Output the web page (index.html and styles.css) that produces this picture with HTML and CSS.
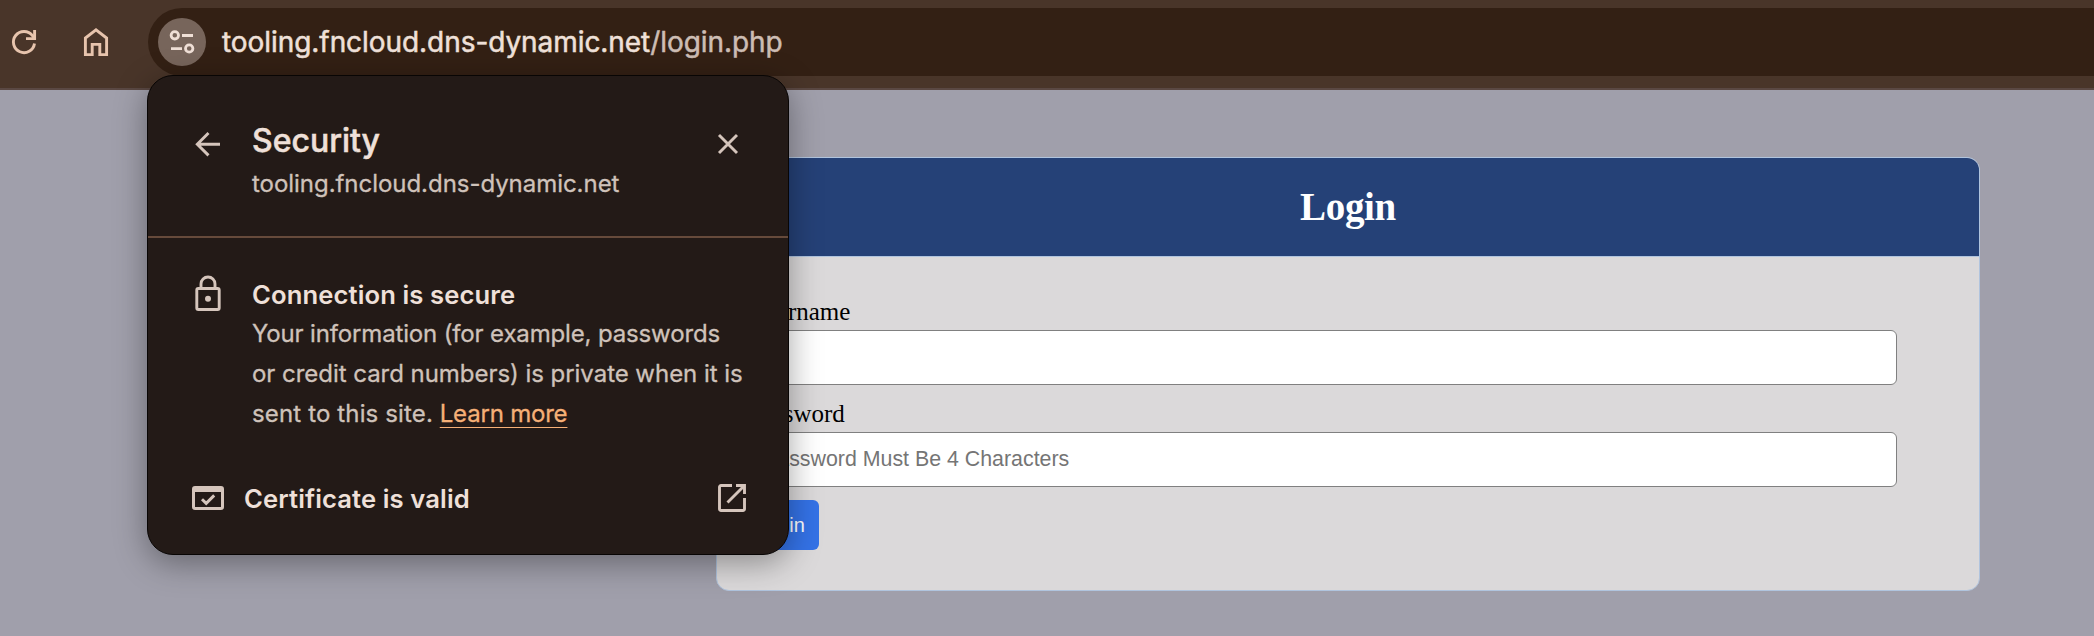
FILE: index.html
```html
<!DOCTYPE html>
<html lang="en">
<head>
<meta charset="utf-8">
<title>Login</title>
<link rel="stylesheet" href="styles.css">
</head>
<body>
<header class="toolbar">
  <svg class="tool-icon reload" width="32" height="32" viewBox="0 0 32 32"><path d="M26.500 17.500A10.600 10.600 0 1 1 24.500 9.700L26.500 12.500" /><path d="M26.600 4v8.600H18" /></svg>
  <svg class="tool-icon home" width="32" height="32" viewBox="0 0 32 32"><path d="M5.400 28.600V12L16 3.800 26.600 12v16.600h-6.800V18.400h-7.600v10.200z" /></svg>
  <div class="omnibox">
    <span class="site-info">
      <svg width="48" height="48" viewBox="0 0 48 48"><circle cx="16.800" cy="17.300" r="3.700"/><path d="M24 17.500h11M13 30.700h11"/><circle cx="31.200" cy="30.500" r="3.700"/></svg>
    </span>
    <span class="url">tooling.fncloud.dns-dynamic.net<span class="path">/login.php</span></span>
  </div>
</header>
<main class="page">
  <section class="card">
    <h1 class="card-title">Login</h1>
    <form class="form">
      <label class="label" for="user">Username</label>
      <input class="field" id="user" type="text">
      <label class="label second" for="pass">Password</label>
      <input class="field" id="pass" type="password" placeholder="Password Must Be 4 Characters">
      <button class="submit" type="button">Login</button>
    </form>
  </section>
</main>
<aside class="bubble">
  <div class="bubble-head">
    <svg class="icon back" width="32" height="32" viewBox="0 0 32 32"><path d="M28 16.200H5.500M16.500 5L5.300 16.200l11.200 11.200"/></svg>
    <div class="heading">
      <h2 class="title">Security</h2>
      <p class="host">tooling.fncloud.dns-dynamic.net</p>
    </div>
    <svg class="icon close" width="24" height="24" viewBox="0 0 24 24"><path d="M3 3l18 18M21 3L3 21"/></svg>
  </div>
  <div class="connection">
    <svg class="icon lock" width="28" height="36" viewBox="0 0 28 36"><rect x="2.800" y="13.500" width="22.400" height="21" rx="1.500"/><path d="M7 13V9a7 7 0 0 1 14 0v4"/><circle class="dot" cx="14" cy="23.800" r="3"/></svg>
    <div class="detail">
      <h3 class="strong">Connection is secure</h3>
      <p class="text"><span class="l1">Your information (for example, passwords</span><br><span class="l2">or credit card numbers) is private when it is</span><br><span class="l3">sent to this site.</span> <a class="more">Learn more</a></p>
    </div>
  </div>
  <div class="certificate">
    <svg class="icon cert" width="32" height="24" viewBox="0 0 32 24"><path class="solid" fill-rule="evenodd" d="M3 0h26a3 3 0 0 1 3 3v18a3 3 0 0 1-3 3H3a3 3 0 0 1-3-3V3a3 3 0 0 1 3-3zM3 6v15h26V6z"/><path d="M10 13.200l4.200 4.200 8-8"/></svg>
    <span class="strong cert-label">Certificate is valid</span>
    <svg class="icon external" width="28" height="28" viewBox="0 0 28 28"><path d="M14 1.500H3A1.500 1.500 0 0 0 1.500 3v22A1.500 1.500 0 0 0 3 26.500h22a1.500 1.500 0 0 0 1.500-1.500V14M18 1.500h8.500V10M26.500 1.500L9.500 18.500"/></svg>
  </div>
</aside>
</body>
</html>
```
FILE: styles.css
```css
* { box-sizing: border-box; }
body { margin: 0; width: 2094px; height: 636px; overflow: hidden; background: #a09fab; display: flex; flex-direction: column; position: relative; }
h1, h2, h3, p { margin: 0; }
svg { display: block; flex: none; }
.toolbar { height: 90px; flex: none; background: #493529; border-bottom: 2px solid #5a4843; display: flex; padding-top: 8px; padding-left: 8px; }
.tool-icon { fill: none; stroke: #e7c4ad; stroke-width: 2.900; margin-top: 18px; }
.home { margin-left: 40px; }
.omnibox { flex: 1; height: 68px; margin-left: 36px; padding-left: 10px; background: #332014; border-radius: 34px 0 0 34px; display: flex; align-items: center; }
.site-info { width: 48px; height: 48px; border-radius: 50%; background: #77655b; }
.site-info svg { fill: none; stroke: #efdfd6; stroke-width: 2.800; }
.url { margin-left: 16px; font: 400 28px/48px Inter, sans-serif; letter-spacing: -0.060px; color: #efe0d9; white-space: nowrap; -webkit-text-stroke: 0.500px currentColor; }
.path { color: #cdbdb4; }
.page { padding: 67px 0 0 716px; }
.card { width: 1264px; height: 434px; border: 1px solid #b0c4de; border-radius: 13px; background: #dbd9da; overflow: hidden; }
.card-title { height: 99px; background: #254177; border-bottom: 1px solid #b0c4de; color: #fff; text-align: center; font: bold 39px/97px "Liberation Serif", serif; letter-spacing: -0.300px; }
.form { padding: 39px 82px 0 32px; display: flex; flex-direction: column; align-items: flex-start; }
.label { font: 25px/32px "Liberation Serif", serif; color: #000; margin-bottom: 2px; }
.second { margin-top: 13px; }
.field { width: 100%; height: 55px; border: 1px solid #808080; border-radius: 6px; background: #fff; padding: 0 13px; font: 21.360px "Liberation Sans", sans-serif; }
.field::placeholder { color: #757575; opacity: 1; }
.submit { margin: 13px 0 0 -7px; height: 50px; padding: 0 14px; border: 0; border-radius: 6px; background: #3472e6; color: #fff; font: 20px "Liberation Sans", sans-serif; }
.bubble { position: absolute; left: 147px; top: 75px; width: 642px; height: 480px; border: 1px solid #080504; border-radius: 26px; background: #231a17; box-shadow: 0 8px 32px rgba(0, 0, 0, .36); font-family: Inter, sans-serif; color: #cfc2ba; }
.icon { fill: none; stroke: #d5c5bc; stroke-width: 2.900; }
.bubble-head { height: 162px; border-bottom: 2px solid #664a3b; display: flex; padding: 43px 48px 0 44px; }
.back { margin-top: 9px; }
.heading { flex: 1; margin-left: 28px; }
.title { font-size: 32px; line-height: 44px; font-weight: 500; color: #efe0d9; -webkit-text-stroke: 0.500px currentColor; }
.host { margin-top: 1px; font-size: 24px; line-height: 40px; letter-spacing: -0.040px; -webkit-text-stroke: 0.300px currentColor; }
.close { margin-top: 13px; }
.connection { display: flex; padding: 37px 0 0 46px; }
.detail { margin-left: 30px; white-space: nowrap; }
.strong { font-size: 25.600px; letter-spacing: 0.120px; line-height: 40px; font-weight: 600; color: #efe0d9; }
.text { margin-top: -1px; font-size: 24px; line-height: 40px; -webkit-text-stroke: 0.300px currentColor; }
.l1 { letter-spacing: -0.150px; }
.l2 { letter-spacing: -0.040px; }
.l3 { letter-spacing: 0.140px; }
.more { letter-spacing: -0.200px; color: #f6b077; text-decoration: underline; text-decoration-thickness: 1px; text-underline-offset: 5px; }
.dot, .solid { fill: #d5c5bc; stroke: none; }
.certificate { display: flex; align-items: center; margin-top: 44px; padding: 0 42px 0 44px; height: 40px; }
.cert-label { flex: 1; margin-left: 20px; padding-top: 2px; }
```
